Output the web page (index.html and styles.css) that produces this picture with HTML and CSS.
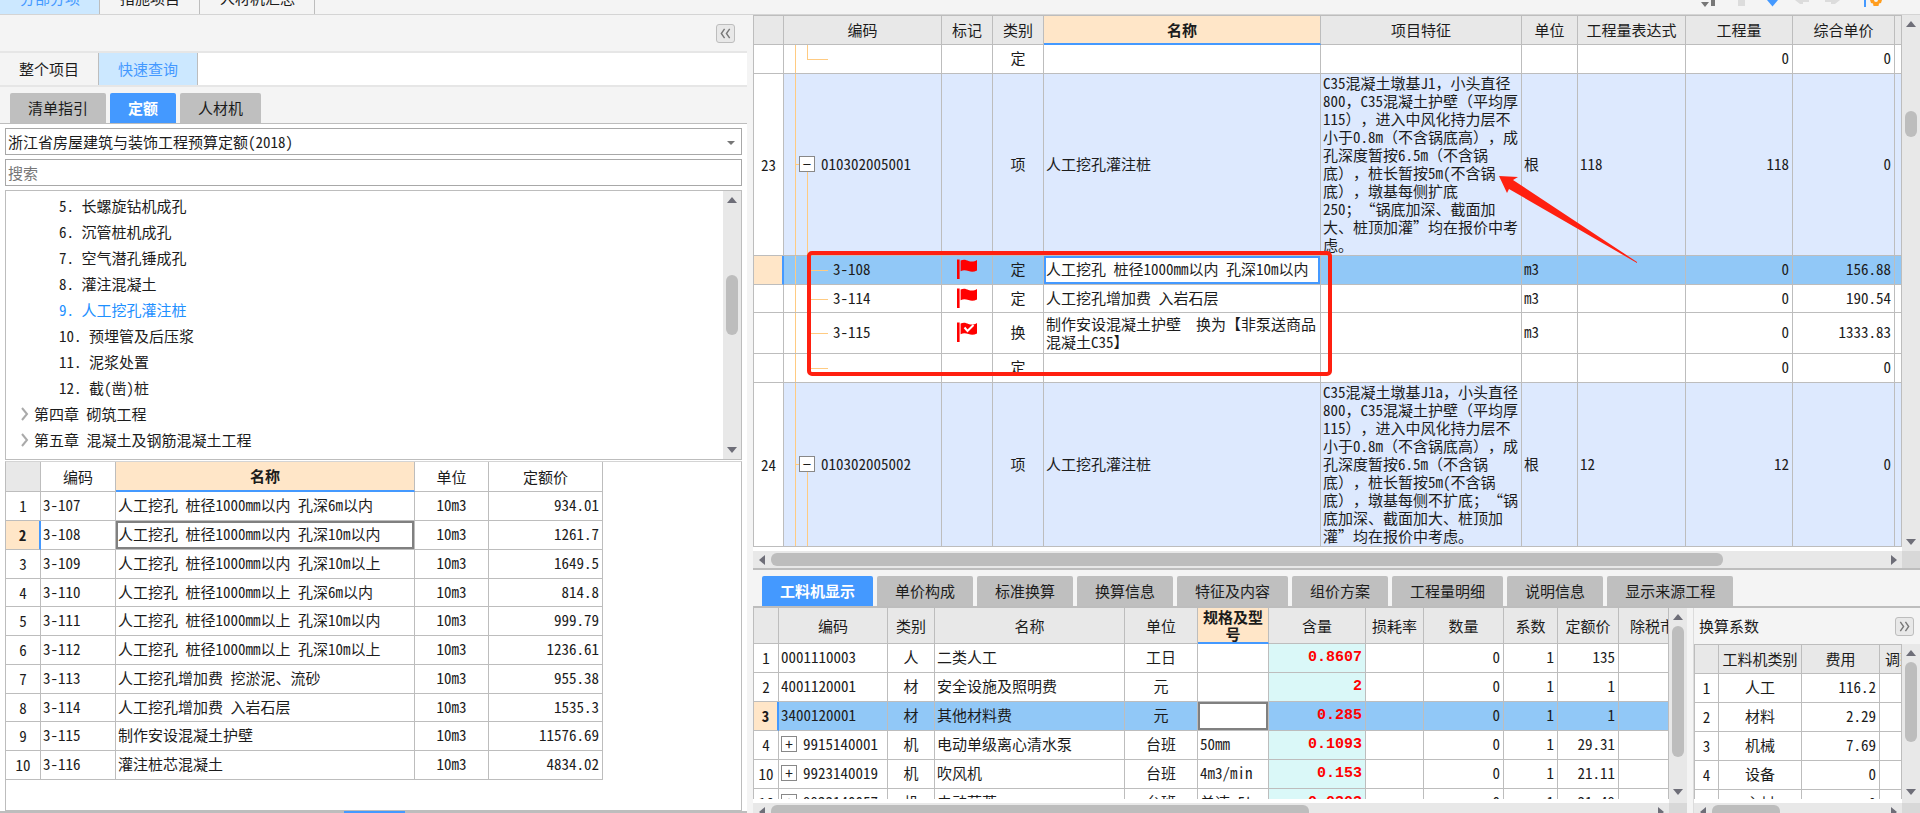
FILE: index.html
```
<!DOCTYPE html>
<html lang="zh-CN">
<head>
<meta charset="utf-8">
<title>分部分项</title>
<link rel="stylesheet" href="styles.css">
</head>
<body>
<svg class="defs" aria-hidden="true">
  <symbol id="flag" viewBox="0 0 22 22"><path fill="#f00" d="M1 1.5h2.6V21H1zM4.6 2.6C8 .8 10 2 12.500 3c3 1 6 .6 8.500-1v10.500c-3 1.500-5.500 1.600-8.500.6s-5-1.400-7.900.2z"/></symbol>
  <symbol id="flag-check" viewBox="0 0 22 22"><use href="#flag"/><path fill="none" stroke="#fff" stroke-width="2" d="M8.500 6.500l3 3.500 6-6"/></symbol>
  <symbol id="dbl" viewBox="0 0 14 14"><path fill="none" stroke="#777" stroke-width="1.500" d="M6 2L2.500 7 6 12M11.500 2L8 7l3.500 5"/></symbol>
</svg>

<header class="topbar">
  <nav class="top-tabs">
    <button class="top-tab on">分部分项</button>
    <button class="top-tab">措施项目</button>
    <button class="top-tab">人材机汇总</button>
  </nav>
  <div class="tools">
    <button aria-label="排序"><svg viewBox="0 0 20 14"><path fill="#777" d="M2 2h8L6 7zM12 0h4v6h-4z"/></svg></button>
    <button aria-label="暂停"><svg viewBox="0 0 20 14"><path fill="#dcdcdc" d="M8 0h7v6H8z"/></svg></button>
    <button aria-label="下移"><svg viewBox="0 0 20 14"><path fill="#4499ff" d="M6 0h11l-5.500 6.500z"/></svg></button>
    <button aria-label="后退"><svg viewBox="0 0 20 14"><path fill="#dcdcdc" d="M3 0h14v2h-6v2H8z"/></svg></button>
    <button aria-label="前进"><svg viewBox="0 0 20 14"><path fill="#dcdcdc" d="M17 0H2v2h6v2h4z"/></svg></button>
    <button class="wide" aria-label="设置"><svg viewBox="0 0 20 14"><path fill="#4499ff" d="M2 0h2v7H2z"/><path fill="#ff9d1e" d="M8 0h12l-1 3-2 .5-.5 2.500h-5L11 3.500 9 3z"/><circle cx="14" cy="0" r="2" fill="#f4f4f4"/></svg></button>
  </div>
</header>

<main class="work">
  <section class="left">
    <div class="fold-row"><button class="fold" aria-label="收起"><svg viewBox="0 0 14 14"><use href="#dbl"/></svg></button></div>
    <nav class="scope">
      <button>整个项目</button>
      <button class="on">快速查询</button>
    </nav>
    <nav class="pills">
      <button>清单指引</button>
      <button class="on">定额</button>
      <button>人材机</button>
    </nav>
    <div class="query">
      <div class="combo"><select class="field" aria-label="定额库"><option>浙江省房屋建筑与装饰工程预算定额(2018)</option></select></div>
      <input class="field" type="text" placeholder="搜索" aria-label="搜索">
      <div class="tree-box">
        <ul class="tree">
          <li>5. 长螺旋钻机成孔</li>
          <li>6. 沉管桩机成孔</li>
          <li>7. 空气潜孔锤成孔</li>
          <li>8. 灌注混凝土</li>
          <li class="hot">9. 人工挖孔灌注桩</li>
          <li>10. 预埋管及后压浆</li>
          <li>11. 泥浆处置</li>
          <li>12. 截(凿)桩</li>
          <li class="chap"><svg viewBox="0 0 8 14"><path d="M1 1l5 6-5 6"/></svg>第四章 砌筑工程</li>
          <li class="chap"><svg viewBox="0 0 8 14"><path d="M1 1l5 6-5 6"/></svg>第五章 混凝土及钢筋混凝土工程</li>
        </ul>
        <div class="vbar"><i class="up"></i><i class="room r76"></i><b class="t60"></b><i class="room grow"></i><i class="down"></i></div>
      </div>
      <div class="quota-box">
        <table class="grid quota">
          <colgroup><col class="w35"><col class="w75"><col class="w299"><col class="w74"><col class="w114"></colgroup>
          <thead><tr><th class="corner"></th><th>编码</th><th class="focus">名称</th><th>单位</th><th>定额价</th></tr></thead>
          <tbody>
            <tr><th>1</th><td>3-107</td><td>人工挖孔 桩径1000mm以内 孔深6m以内</td><td class="c">10m3</td><td class="r">934.01</td></tr>
            <tr><th class="cur">2</th><td>3-108</td><td class="cell-on">人工挖孔 桩径1000mm以内 孔深10m以内</td><td class="c">10m3</td><td class="r">1261.7</td></tr>
            <tr><th>3</th><td>3-109</td><td>人工挖孔 桩径1000mm以内 孔深10m以上</td><td class="c">10m3</td><td class="r">1649.5</td></tr>
            <tr><th>4</th><td>3-110</td><td>人工挖孔 桩径1000mm以上 孔深6m以内</td><td class="c">10m3</td><td class="r">814.8</td></tr>
            <tr><th>5</th><td>3-111</td><td>人工挖孔 桩径1000mm以上 孔深10m以内</td><td class="c">10m3</td><td class="r">999.79</td></tr>
            <tr><th>6</th><td>3-112</td><td>人工挖孔 桩径1000mm以上 孔深10m以上</td><td class="c">10m3</td><td class="r">1236.61</td></tr>
            <tr><th>7</th><td>3-113</td><td>人工挖孔增加费 挖淤泥、流砂</td><td class="c">10m3</td><td class="r">955.38</td></tr>
            <tr><th>8</th><td>3-114</td><td>人工挖孔增加费 入岩石层</td><td class="c">10m3</td><td class="r">1535.3</td></tr>
            <tr><th>9</th><td>3-115</td><td>制作安设混凝土护壁</td><td class="c">10m3</td><td class="r">11576.69</td></tr>
            <tr><th>10</th><td>3-116</td><td>灌注桩芯混凝土</td><td class="c">10m3</td><td class="r">4834.02</td></tr>
          </tbody>
        </table>
      </div>
    </div>
    <div class="grip"><span></span></div>
  </section>

  <section class="right">
    <div class="bill">
      <table class="grid bill-table">
        <colgroup><col class="w31"><col class="w158"><col class="w51"><col class="w51"><col class="w277"><col class="w201"><col class="w56"><col class="w108"><col class="w107"><col class="w102"><col></colgroup>
        <thead><tr><th></th><th>编码</th><th>标记</th><th>类别</th><th class="focus">名称</th><th>项目特征</th><th>单位</th><th>工程量表达式</th><th>工程量</th><th>综合单价</th><th></th></tr></thead>
        <tbody>
          <tr><th></th><td class="code last"></td><td></td><td class="c">定</td><td></td><td></td><td></td><td></td><td class="r">0</td><td class="r">0</td><td></td></tr>
          <tr class="item tall"><th>23</th><td class="code open"><span class="node"><button class="box" aria-label="折叠">−</button>010302005001</span></td><td></td><td class="c">项</td><td>人工挖孔灌注桩</td><td class="desc">C35混凝土墩基J1，小头直径<br>800，C35混凝土护壁（平均厚<br>115），进入中风化持力层不<br>小于0.8m（不含锅底高），成<br>孔深度暂按6.5m（不含锅<br>底），桩长暂按5m(不含锅<br>底），墩基每侧扩底<br>250；“锅底加深、截面加<br>大、桩顶加灌”均在报价中考<br>虑。</td><td>根</td><td>118</td><td class="r">118</td><td class="r">0</td><td></td></tr>
          <tr class="sel"><th class="cur"></th><td class="code leaf">3-108</td><td class="c"><svg class="flag"><use href="#flag"/></svg></td><td class="c">定</td><td class="editing">人工挖孔 桩径1000mm以内 孔深10m以内</td><td></td><td>m3</td><td></td><td class="r">0</td><td class="r">156.88</td><td></td></tr>
          <tr class="low"><th></th><td class="code leaf">3-114</td><td class="c"><svg class="flag"><use href="#flag"/></svg></td><td class="c">定</td><td>人工挖孔增加费 入岩石层</td><td></td><td>m3</td><td></td><td class="r">0</td><td class="r">190.54</td><td></td></tr>
          <tr class="double"><th></th><td class="code leaf">3-115</td><td class="c"><svg class="flag"><use href="#flag-check"/></svg></td><td class="c">换</td><td class="desc">制作安设混凝土护壁&emsp;换为【非泵送商品<br>混凝土C35】</td><td></td><td>m3</td><td></td><td class="r">0</td><td class="r">1333.83</td><td></td></tr>
          <tr><th></th><td class="code last"></td><td></td><td class="c">定</td><td></td><td></td><td></td><td></td><td class="r">0</td><td class="r">0</td><td></td></tr>
          <tr class="item mid"><th>24</th><td class="code open"><span class="node"><button class="box" aria-label="折叠">−</button>010302005002</span></td><td></td><td class="c">项</td><td>人工挖孔灌注桩</td><td class="desc">C35混凝土墩基J1a，小头直径<br>800，C35混凝土护壁（平均厚<br>115），进入中风化持力层不<br>小于0.8m（不含锅底高），成<br>孔深度暂按6.5m（不含锅<br>底），桩长暂按5m(不含锅<br>底），墩基每侧不扩底；“锅<br>底加深、截面加大、桩顶加<br>灌”均在报价中考虑。</td><td>根</td><td>12</td><td class="r">12</td><td class="r">0</td><td></td></tr>
        </tbody>
      </table>
      <div class="vbar"><i class="up"></i><i class="room r78"></i><b class="t26"></b><i class="room grow"></i><i class="down"></i></div>
      <svg class="mark-box" aria-hidden="true"><rect x="2" y="2" width="521" height="121" rx="3"/></svg>
      <svg class="mark-arrow" viewBox="0 0 140 90" aria-hidden="true"><path d="M0 1L19 2l-5 3 124 82v1L10 14l-2 4z"/></svg>
    </div>
    <div class="hbar"><i class="prev"></i><b class="s955"></b><i class="room grow"></i><i class="next"></i><i class="bend"></i></div>

    <nav class="pills lower">
      <button class="on">工料机显示</button>
      <button>单价构成</button>
      <button>标准换算</button>
      <button>换算信息</button>
      <button>特征及内容</button>
      <button>组价方案</button>
      <button>工程量明细</button>
      <button>说明信息</button>
      <button>显示来源工程</button>
    </nav>

    <div class="panes">
      <div class="pane">
        <div class="view">
          <div class="clip">
          <table class="grid res">
            <colgroup><col class="w26"><col class="w109"><col class="w47"><col class="w190"><col class="w73"><col class="w71"><col class="w97"><col class="w58"><col class="w80"><col class="w54"><col class="w61"><col></colgroup>
            <thead><tr><th></th><th>编码</th><th>类别</th><th>名称</th><th>单位</th><th class="focus"><div class="two">规格及型号</div></th><th>含量</th><th>损耗率</th><th>数量</th><th>系数</th><th>定额价</th><th class="cut">除税市场价</th></tr></thead>
            <tbody>
              <tr><th>1</th><td>0001110003</td><td class="c">人</td><td>二类人工</td><td class="c">工日</td><td></td><td class="qty">0.8607</td><td></td><td class="r">0</td><td class="r">1</td><td class="r">135</td><td></td></tr>
              <tr><th>2</th><td>4001120001</td><td class="c">材</td><td>安全设施及照明费</td><td class="c">元</td><td></td><td class="qty">2</td><td></td><td class="r">0</td><td class="r">1</td><td class="r">1</td><td></td></tr>
              <tr class="sel"><th class="cur">3</th><td>3400120001</td><td class="c">材</td><td>其他材料费</td><td class="c">元</td><td class="cell-on"></td><td class="qty">0.285</td><td></td><td class="r">0</td><td class="r">1</td><td class="r">1</td><td></td></tr>
              <tr><th>4</th><td><span class="node"><button class="box" aria-label="展开">+</button>9915140001</span></td><td class="c">机</td><td>电动单级离心清水泵</td><td class="c">台班</td><td>50mm</td><td class="qty">0.1093</td><td></td><td class="r">0</td><td class="r">1</td><td class="r">29.31</td><td></td></tr>
              <tr><th>10</th><td><span class="node"><button class="box" aria-label="展开">+</button>9923140019</span></td><td class="c">机</td><td>吹风机</td><td class="c">台班</td><td>4m3/min</td><td class="qty">0.153</td><td></td><td class="r">0</td><td class="r">1</td><td class="r">21.11</td><td></td></tr>
              <tr><th>16</th><td><span class="node"><button class="box" aria-label="展开">+</button>9923140057</span></td><td class="c">机</td><td>电动葫芦</td><td class="c">台班</td><td>单速 5t</td><td class="qty">0.0303</td><td></td><td class="r">0</td><td class="r">1</td><td class="r">31.49</td><td></td></tr>
            </tbody>
          </table>
          </div>
          <div class="vbar"><i class="up"></i><b class="t131"></b><i class="room grow"></i><i class="down"></i></div>
        </div>
        <div class="hbar"><i class="prev"></i><b class="s538"></b><i class="room grow"></i><i class="next"></i><i class="bend"></i></div>
      </div>
      <div class="splitter"></div>
      <div class="pane">
        <div class="pane-head"><h2>换算系数</h2><button class="fold" aria-label="展开"><svg class="flip" viewBox="0 0 14 14"><use href="#dbl"/></svg></button></div>
        <div class="view">
          <div class="clip">
          <table class="grid factor">
            <colgroup><col class="w25"><col class="w83"><col class="w78"><col></colgroup>
            <thead><tr><th></th><th>工料机类别</th><th>费用</th><th class="cut">调整系数</th></tr></thead>
            <tbody>
              <tr><th>1</th><td class="c">人工</td><td class="r">116.2</td><td></td></tr>
              <tr><th>2</th><td class="c">材料</td><td class="r">2.29</td><td></td></tr>
              <tr><th>3</th><td class="c">机械</td><td class="r">7.69</td><td></td></tr>
              <tr><th>4</th><td class="c">设备</td><td class="r">0</td><td></td></tr>
              <tr><th>5</th><td class="c">主材</td><td class="r">0</td><td></td></tr>
            </tbody>
          </table>
          </div>
          <div class="vbar"><i class="up"></i><b class="t80"></b><i class="room grow"></i><i class="down"></i></div>
        </div>
        <div class="hbar"><i class="prev"></i><b class="s70"></b><i class="room grow"></i><i class="next"></i><i class="bend"></i></div>
      </div>
    </div>
  </section>
</main>
</body>
</html>
```

FILE: styles.css
```
* { box-sizing: border-box; }

body {
  margin: 0;
  height: 100vh;
  display: flex;
  flex-direction: column;
  overflow: hidden;
  background: #f4f4f4;
  color: #1c1c1c;
  font: 15px/18px "Noto Sans Mono CJK SC", "Noto Sans CJK SC", sans-serif;
  text-spacing-trim: space-all;
}

button, input, select {
  font: inherit;
  color: inherit;
  margin: 0;
  padding: 0;
  border: 0;
  border-radius: 0;
  background: none;
}

svg { display: block; }
.defs { display: none; }

/* top strip, scrolled partly out of view */
.topbar {
  display: flex;
  justify-content: space-between;
  height: 15px;
  flex: none;
  overflow: hidden;
  border-bottom: 1px solid #d4d4d4;
}
.top-tabs { display: flex; align-items: flex-end; }
.top-tab {
  height: 32px;
  padding: 0 19px 0 20px;
  border-right: 1px solid #bdbdbd;
  flex: none;
}
.top-tab.on { background: #cce8ff; color: #4499ff; }
.tools { display: flex; gap: 11px; padding-right: 38px; }
.tools button { width: 20px; height: 14px; }
.tools .wide { margin-left: 8px; }

.work {
  flex: 1;
  min-height: 0;
  display: grid;
  grid-template-columns: minmax(0, 753fr) minmax(0, 1167fr);
}

/* left side */
.left {
  display: flex;
  flex-direction: column;
  min-height: 0;
  padding-right: 6px;
}
.fold-row {
  display: flex;
  justify-content: flex-end;
  align-items: center;
  height: 38px;
  padding: 0 12px 0 0;
  border-bottom: 2px solid #e6e6e6;
}
.fold {
  width: 19px;
  height: 19px;
  padding: 2px;
  border: 1px solid #bdbdbd;
  border-radius: 3px;
  background: #e8e8e8;
}
.flip { transform: scaleX(-1); }
.scope {
  display: flex;
  height: 34px;
  background: #fff;
  border-bottom: 2px solid #e6e6e6;
}
.scope button {
  padding: 0 19px;
  border-right: 1px solid #bdbdbd;
  background: #f4f4f4;
}
.scope .on { background: #cce8ff; color: #4499ff; }

.pills {
  display: flex;
  gap: 4px;
  padding: 6px 10px 0;
  border-bottom: 1px solid #bdbdbd;
}
.pills button {
  height: 30px;
  padding: 0 18px;
  background: #bfbfbf;
  border-radius: 2px 2px 0 0;
  white-space: nowrap;
}
.pills .on { background: #4499ff; color: #fff; font-weight: 700; }

.query {
  flex: 1;
  display: flex;
  flex-direction: column;
  gap: 4px;
  min-height: 0;
  padding: 4px 5px 0;
  background: #fff;
}
.field {
  width: 100%;
  height: 27px;
  padding: 0 2px;
  border: 1px solid #a8a8a8;
  background: #fff;
  appearance: none;
  flex: none;
}
.field::placeholder { color: #777; opacity: 1; }
.combo { position: relative; }
.combo .field { display: block; }
.combo::after {
  content: "";
  position: absolute;
  right: 7px;
  top: 13px;
  border: 4px solid transparent;
  border-top-color: #777;
  border-bottom: 0;
}
.tree-box {
  display: flex;
  border: 1px solid #bdbdbd;
  height: 270px;
  flex: none;
}
.tree {
  flex: 1;
  margin: 0;
  padding: 2px 0 0;
  list-style: none;
  line-height: 26px;
}
.tree li { padding-left: 53px; white-space: pre; }
.tree .hot { color: #1e90ff; }
.tree .chap { display: flex; align-items: center; gap: 5px; padding-left: 15px; }
.chap svg { width: 8px; height: 14px; fill: none; stroke: #aaa; stroke-width: 2; }
.quota-box {
  flex: 1;
  min-height: 0;
  margin-top: -3px;
  border: 1px solid #bdbdbd;
  border-top-color: #d4d4d4;
}
.grip { height: 2px; background: #bdbdbd; flex: none; }
.grip span { display: block; width: 61px; height: 2px; margin-left: 46%; background: #4499ff; }

/* grids */
.grid {
  table-layout: fixed;
  border-collapse: separate;
  border-spacing: 0;
  width: 100%;
  background: #fff;
}
.grid th, .grid td {
  height: 29px;
  padding: 0 3px 2px 2px;
  border-right: 1px solid #bdbdbd;
  border-bottom: 1px solid #bdbdbd;
  font-weight: 400;
  text-align: left;
  white-space: nowrap;
  overflow: hidden;
}
.grid th { text-align: center; padding: 0; }
.grid thead th { background: #e8e8e8; height: 30px; }
.grid thead .focus {
  background: #ffe6c8;
  border-bottom: 2px solid #4499ff;
  font-weight: 700;
}
.grid thead .cut { text-align: left; text-indent: 11px; text-overflow: clip; }
.grid tbody .cur {
  background: #ffe6c8;
  border-right: 2px solid #4499ff;
  font-weight: 700;
}
.grid .c { text-align: center; padding: 0 0 2px; }
.grid .r { text-align: right; }
.grid .sel td { background-color: #91c8f7; }
.grid .cell-on { background-color: #fff !important; box-shadow: inset 0 0 0 2px #808080; }
.grid .editing { background-color: #fff !important; box-shadow: inset 0 0 0 2px #4499ff; }

.quota { width: 597px; }
.quota thead th { background: #fff; }
.quota thead .corner { background: #e8e8e8; }
.quota tbody tr:nth-child(4n) > * { height: 28px; }

.node { display: flex; align-items: center; gap: 6px; }
.box {
  width: 16px;
  height: 16px;
  border: 1px solid #888;
  background: #fff;
  line-height: 14px;
  text-align: center;
  flex: none;
}

/* bill of quantities */
.right {
  display: flex;
  flex-direction: column;
  min-height: 0;
}
.bill {
  position: relative;
  display: flex;
  align-items: flex-start;
  padding-bottom: 4px;
  background: #fff;
}
.bill .vbar { align-self: stretch; margin-bottom: -4px; }
.bill-table thead th { border-top: 1px solid #bdbdbd; }
.bill-table th:first-child, .res th:first-child, .factor th:first-child { border-left: 1px solid #bdbdbd; }
.bill-table .item td { background-color: #dde9fe; }
.bill-table .item.tall > * { height: 182px; }
.bill-table .item.mid > * { height: 164px; }
.bill-table .low > * { height: 28px; }
.bill-table .double > * { height: 41px; }
.bill-table .desc { padding: 0 0 1px 2px; }

.grid .code {
  padding-left: 15px;
  background-repeat: no-repeat;
  background-image: linear-gradient(#ffcb82, #ffcb82);
  background-size: 1px 100%;
  background-position: 11px 0;
}
.grid .code.last, .grid .code.leaf {
  padding-left: 49px;
  background-image: linear-gradient(#ffcb82, #ffcb82), linear-gradient(#ffcb82, #ffcb82), linear-gradient(#ffcb82, #ffcb82);
  background-size: 1px 100%, 21px 1px, 1px 100%;
  background-position: 11px 0, 23px 14px, 23px 0;
}
.grid .code.last { background-size: 1px 100%, 21px 1px, 1px 14px; }
.grid .double .code { background-position: 11px 0, 23px 20px, 23px 0; }
.grid .code.open {
  background-image: linear-gradient(#ffcb82, #ffcb82), linear-gradient(#ffcb82, #ffcb82), linear-gradient(#ffcb82, #ffcb82);
  background-size: 1px 100%, 4px 1px, 1px 50%;
  background-position: 11px 0, 11px 50%, 23px 100%;
}
.flag { width: 22px; height: 22px; margin: 0 auto; }

/* red annotations over the bill */
.mark-box, .mark-arrow { position: absolute; pointer-events: none; }
.mark-box {
  left: 54px;
  top: 236px;
  width: 526px;
  height: 126px;
  fill: none;
  stroke: #ff2010;
  stroke-width: 4;
}
.mark-arrow { left: 746px; top: 160px; width: 140px; height: 90px; fill: #ff2010; }

/* scroll bars */
.vbar, .hbar { display: flex; background: #e8e8e8; flex: none; }
.vbar { flex-direction: column; align-items: center; width: 18px; padding: 6px 0; }
.hbar { align-items: center; height: 17px; padding-left: 6px; }
.vbar b, .hbar b { background: #bdbdbd; border-radius: 6px; flex: none; }
.vbar b { width: 12px; }
.hbar b { height: 13px; }
.grow { flex: 1; }
.up, .down, .prev, .next { border: 5px solid transparent; flex: none; }
.up { border-bottom: 6px solid #6e6e78; border-top: 0; margin-bottom: 6px; }
.down { border-top: 6px solid #6e6e78; border-bottom: 0; }
.prev { border-right: 6px solid #6e6e78; border-left: 0; margin-right: 6px; }
.next { border-left: 6px solid #6e6e78; border-right: 0; margin-right: 5px; }
.bend { width: 18px; align-self: stretch; background: #d8d8d8; }
.r76 { height: 66px; }
.r78 { height: 78px; }
.t26 { height: 26px; }
.t60 { height: 60px; }
.t80 { height: 80px; }
.t131 { height: 131px; }
.s955 { width: 82%; }
.s538 { width: 58%; }
.s70 { width: 31%; }

/* lower panes */
.lower { padding: 6px 9px 0; border-top: 2px solid #bdbdbd; border-bottom-width: 2px; }
.panes {
  flex: 1;
  min-height: 0;
  display: grid;
  grid-template-columns: minmax(0, 934fr) 7px minmax(0, 226fr);
}
.pane { display: flex; flex-direction: column; min-height: 0; background: #fff; }
.view { flex: 1; display: flex; min-height: 0; margin-bottom: 4px; }
.clip { flex: 1; min-width: 0; overflow: hidden; }
.pane .vbar { margin-bottom: -4px; padding-bottom: 8px; }
.pane .hbar { margin-bottom: -7px; }
.res thead th { height: 36px; }
.two { height: 34px; line-height: 17px; white-space: normal; }
.grid .qty {
  padding: 0 3px 0 0;
  color: #f00;
  text-align: right;
  font: 700 15px/18px "Liberation Mono", monospace;
}
.res tr:not(.sel) .qty { background: #daf8f8; }
.splitter { background: #f4f4f4; border-right: 1px solid #dcdcdc; }
.pane-head {
  display: flex;
  align-items: center;
  justify-content: space-between;
  height: 36px;
  padding: 0 6px 0 5px;
  background: #f4f4f4;
  flex: none;
}
.pane-head h2 { margin: 0; font: inherit; }
.factor thead th { border-top: 1px solid #bdbdbd; }
.factor thead .cut { text-indent: 5px; }

/* column widths */
.w25 { width: 25px; }
.w26 { width: 26px; }
.w31 { width: 31px; }
.w35 { width: 35px; }
.w47 { width: 47px; }
.w51 { width: 51px; }
.w54 { width: 54px; }
.w56 { width: 56px; }
.w58 { width: 58px; }
.w61 { width: 61px; }
.w71 { width: 71px; }
.w73 { width: 73px; }
.w74 { width: 74px; }
.w75 { width: 75px; }
.w78 { width: 78px; }
.w80 { width: 80px; }
.w83 { width: 83px; }
.w97 { width: 97px; }
.w102 { width: 102px; }
.w107 { width: 107px; }
.w108 { width: 108px; }
.w109 { width: 109px; }
.w114 { width: 114px; }
.w158 { width: 158px; }
.w190 { width: 190px; }
.w201 { width: 201px; }
.w277 { width: 277px; }
.w299 { width: 299px; }
```
